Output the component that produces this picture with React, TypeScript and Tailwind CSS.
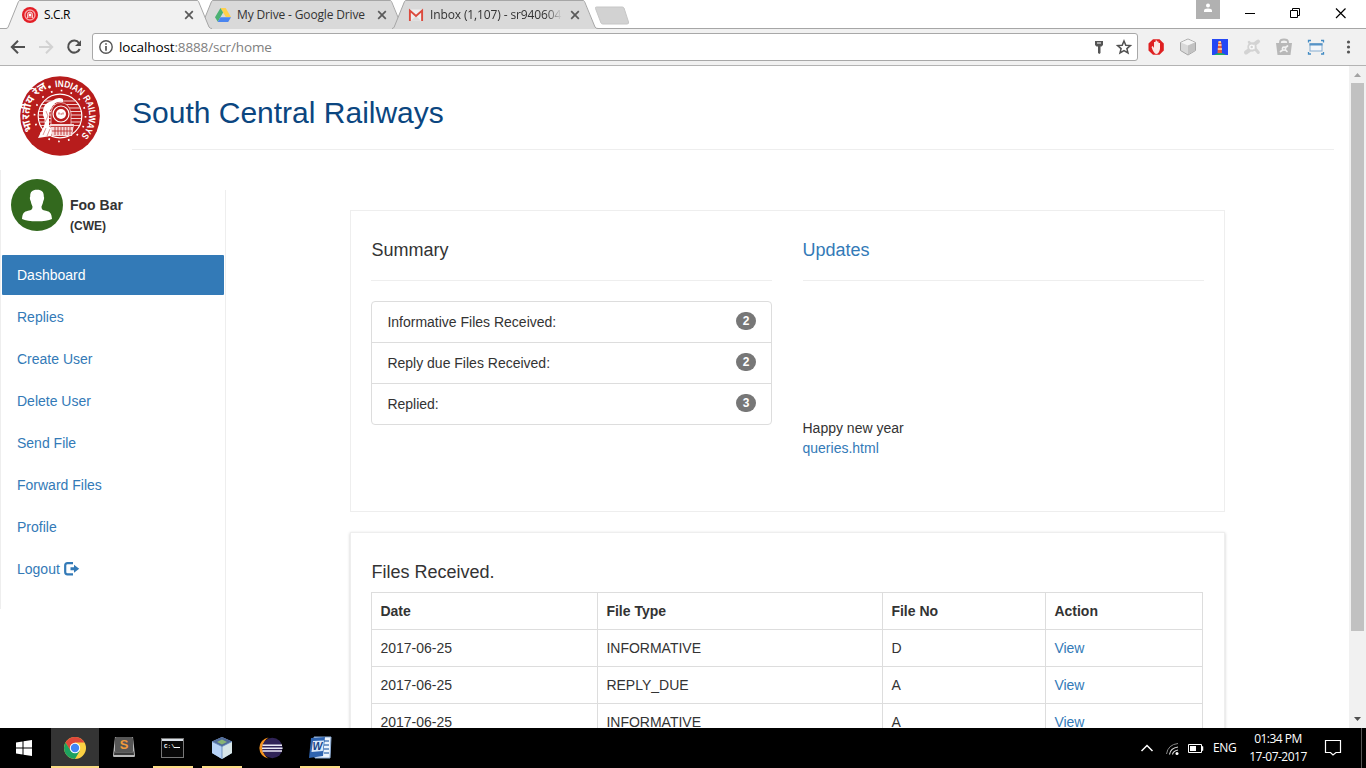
import React from "react";

const SANS = "font-['Liberation_Sans',sans-serif]";
const UI = "font-['Open_Sans','Noto_Sans',sans-serif]";

/* ---------- browser tabs ---------- */

function TabShape({ fill }: { fill: string }) {
  return (
    <svg className="absolute left-0 top-0" width="206" height="29" viewBox="0 0 206 29">
      <path d="M0 28.5 L2 28 L12.5 1.2 Q13 .5 14 .5 H190 Q191.5 .5 192 1.5 L203 27 Q204 28.5 206 28.5 V29 H0Z" fill={fill} />
      <path d="M0 28.5 Q1.5 28.5 2.2 27 L12.5 1.5 Q13 .5 14 .5 H191 Q192 .5 192.5 1.5 L203 27 Q204 28.5 206 28.5" fill="none" stroke="#a6a6a6" />
    </svg>
  );
}

function Tab({ icon, title, active = false, fade = false, textClass }: { icon: React.ReactNode; title: string; active?: boolean; fade?: boolean; textClass: string }) {
  return (
    <div className={active ? "relative z-10 ml-1.5 h-[29px] w-[205px]" : "relative -ml-3 h-[29px] w-[205px]"}>
      <TabShape fill={active ? "#f1f1f1" : "#d9d9d9"} />
      <div className="relative flex h-[29px] items-center pl-4">
        <span className="h-4 w-4 shrink-0">{icon}</span>
        <span className={`ml-1.5 w-[132px] overflow-hidden text-[12px] leading-4 whitespace-nowrap ${textClass} ${fade ? "[mask-image:linear-gradient(to_right,black_88%,transparent)] text-[#333]" : active ? "text-black" : "text-[#333]"}`}>{title}</span>
        <svg className="ml-[8px] shrink-0" width="10" height="10" viewBox="0 0 10 10">
          <path d="M1.2 1.2 L8.8 8.8 M8.8 1.2 L1.2 8.8" stroke="#5a5a5a" strokeWidth="1.7" />
        </svg>
      </div>
    </div>
  );
}

const RailFavicon = () => (
  <svg width="16" height="16" viewBox="0 0 16 16">
    <circle cx="8" cy="8" r="8" fill="#e31e26" />
    <circle cx="8" cy="8" r="5" fill="none" stroke="#f5a5a8" strokeWidth="1.4" />
    <path d="M5.5 11 V7.5 A2.5 2.5 0 0 1 10.5 7.5 V11" fill="#f07378" stroke="#fbd6d7" strokeWidth=".9" />
    <circle cx="8" cy="8" r="1.2" fill="#fff" />
  </svg>
);
const DriveIcon = () => (
  <svg width="16" height="16" viewBox="0 0 16 16">
    <path d="M5.5 1 H10.7 L16 10 H10.8Z" fill="#ffd04b" />
    <path d="M5.5 1 L8.1 5.6 L2.8 14.8 L0 10.2Z" fill="#4bb173" />
    <path d="M5.4 10.2 H16 L13.2 14.9 H2.7Z" fill="#4a85f0" />
  </svg>
);
const GmailIcon = () => (
  <svg width="16" height="16" viewBox="0 0 16 16">
    <path d="M1 2.5 H15 V14 H1Z" fill="#efefef" />
    <path d="M3 13.8 L8 9 L13 13.8Z" fill="#dcdcdc" />
    <path d="M1.9 13.9 V3.6 L8 9 L14.1 3.6 V13.9" fill="none" stroke="#dc4b3e" strokeWidth="1.9" />
  </svg>
);

function TabStrip() {
  return (
    <div className="relative flex h-[29px] bg-white">
      <div className="absolute bottom-0 left-0 h-px w-full bg-[#a6a6a6]" />
      <Tab active icon={<RailFavicon />} title="S.C.R" textClass="tracking-[-0.35px]" />
      <Tab icon={<DriveIcon />} title="My Drive - Google Drive" textClass="tracking-[-0.15px]" />
      <Tab fade icon={<GmailIcon />} title="Inbox (1,107) - sr940604" textClass="tracking-[-0.12px]" />
      <svg className="relative -ml-[3px] mt-1.5" width="36" height="19" viewBox="0 0 36 19">
        <path d="M2.5 1 H28 Q29.5 1 30 2 L34.5 16 Q35 18 33 18 H9 Q7.500 18 7 17 L1.500 2.500 Q1 1 2.500 1Z" fill="#d2d2d2" stroke="#c6c6c6" />
      </svg>
      <div className="ml-auto flex">
        <div className="flex h-[19px] w-6 justify-center bg-[#b1b1b1]">
          <svg width="24" height="19" viewBox="0 0 24 19">
            <circle cx="12" cy="5.500" r="2" fill="#fff" />
            <path d="M8 12 V10.500 Q8 8.500 12 8.500 Q16 8.500 16 10.500 V12Z" fill="#fff" />
          </svg>
        </div>
        <svg width="146" height="26" viewBox="0 0 146 26" fill="none" stroke="#000">
          <path d="M25 13.500 H35" />
          <path d="M70.500 10.500 H77.500 V17.500 H70.500Z M72.500 10.500 V8.500 H79.500 V15.500 H77.500" />
          <path d="M116 8.500 L125.500 18 M125.500 8.500 L116 18" strokeWidth="1.2" />
        </svg>
      </div>
    </div>
  );
}

/* ---------- toolbar ---------- */

function Toolbar() {
  return (
    <div className="flex h-[37px] items-center border-b border-[#b3b3b3] bg-[#f1f1f1]">
      <svg width="92" height="36" viewBox="0 0 92 36" fill="none">
        <path d="M25 18 H12 M18 11.700 L11.800 18 L18 24.300" stroke="#505050" strokeWidth="2" />
        <path d="M39 18 H52 M46 11.700 L52.200 18 L46 24.300" stroke="#d2d2d2" strokeWidth="2" />
        <path d="M79 14 A6 6 0 1 0 79.700 20" stroke="#505050" strokeWidth="2" />
        <path d="M81 11.300 V17 H75Z" fill="#505050" />
      </svg>
      <div className="flex h-7 w-[1046px] items-center rounded-[3px] border border-[#a8a8a8] bg-white pl-[6px]">
        <svg width="14" height="14" viewBox="0 0 14 14">
          <circle cx="7" cy="7" r="6.200" fill="none" stroke="#555" strokeWidth="1.400" />
          <path d="M7 3.200 V4.800 M7 6 V10.700" stroke="#555" strokeWidth="1.700" />
        </svg>
        <span className="ml-[6px] text-[13.500px] leading-5 tracking-[-0.130px] whitespace-nowrap text-[#808080]"><span className="text-black">localhost</span>:8888/scr/home</span>
        <svg className="ml-auto" width="47" height="26" viewBox="0 0 47 26">
          <path d="M5 7 H13 V11 L11.500 12.500 H10.500 V19 L9.300 20 L8 19 V12.500 H6.500 L5 11Z" fill="#555" />
          <path d="M7 9 H11" stroke="#fff" />
          <path d="M34 7 L35.800 11.200 L40.400 11.600 L36.900 14.600 L38 19 L34 16.700 L30 19 L31.100 14.600 L27.600 11.600 L32.200 11.200Z" fill="none" stroke="#505050" strokeWidth="1.500" />
        </svg>
      </div>
      <svg width="228" height="36" viewBox="1138 29 228 36">
        <path d="M1153 39.300 H1159.500 L1163.800 43.500 V50.500 L1159.500 54.800 H1153 L1148.500 50.500 V43.500Z" fill="#df2021" />
        <path d="M1151.500 47 L1152.700 46 L1154 48 V42 H1155.500 V46 V40.500 H1157 V46 V41.500 H1158.500 V47 V43 H1160 V49 Q1159 54 1156 54 Q1153.500 53 1151.500 47Z" fill="#f9e9e5" />
        <path d="M1188 39 L1195.500 42.500 V50.500 L1188 55 L1180.500 50.500 V42.500Z" fill="#d9d9d9" stroke="#a5a5a5" />
        <path d="M1181 42.500 L1188 45.500 L1195 42.500 L1188 39.500Z" fill="#f4f4f4" />
        <path d="M1188 45.500 L1195 42.500 V50.500 L1188 54.500Z" fill="#c2c2c2" />
        <rect x="1212" y="39" width="16" height="16" fill="#2548f5" />
        <path d="M1214 55 Q1220 51 1226 55Z" fill="#20b35c" />
        <path d="M1218.200 42 H1221.300 L1222 53 H1217.500Z" fill="#ed5935" />
        <path d="M1218 45 H1221.500 M1217.800 49 H1222" stroke="#ffe0b5" strokeWidth="1.500" />
        <rect x="1218.500" y="41" width="2.500" height="2" fill="#ffd18b" />
        <g stroke="#d3d3d3" strokeLinecap="round" fill="none">
          <path d="M1254 44.500 L1258 41.500" strokeWidth="4" />
          <path d="M1255 48.500 L1258.300 52.500" strokeWidth="3" />
          <path d="M1249.500 50 L1246 52.500" strokeWidth="4" />
          <path d="M1250 43.500 L1249 42" strokeWidth="2.500" />
        </g>
        <circle cx="1252" cy="47" r="4.700" fill="#d3d3d3" />
        <circle cx="1251.700" cy="47" r="1.900" fill="none" stroke="#fafafa" strokeWidth="1.300" />
        <path d="M1254 44.800 V49.300" stroke="#fafafa" strokeWidth="1.100" />
        <path d="M1276 43 H1292 L1290.500 55 H1277.500Z" fill="#b8b8b8" />
        <path d="M1280 44 V42 Q1280 39.500 1284 39.500 Q1288 39.500 1288 42 V44" fill="none" stroke="#b8b8b8" strokeWidth="1.800" />
        <circle cx="1284" cy="48.700" r="2.400" fill="#f1f1f1" />
        <path d="M1285.500 47.500 L1287.500 46 M1285.500 50 L1287 51.500 M1282.500 50.300 L1280.500 51.500" stroke="#f1f1f1" strokeWidth="1.700" strokeLinecap="round" />
        <circle cx="1284" cy="48.700" r=".8" fill="#b8b8b8" />
        <rect x="1310" y="43.500" width="12" height="7.500" fill="#f3f6fa" stroke="#86add0" />
        <path d="M1309.500 44.500 H1322.500" stroke="#5593c7" strokeWidth="2" />
        <path d="M1308.500 42.500 V40.500 H1311 M1321 40.500 H1323.500 V42.500 M1323.500 52 V54 H1321 M1311 54 H1308.500 V52" fill="none" stroke="#438cc4" strokeWidth="1.300" />
        <g fill="#555"><circle cx="1348.500" cy="42" r="1.600" /><circle cx="1348.500" cy="47" r="1.600" /><circle cx="1348.500" cy="52" r="1.600" /></g>
      </svg>
    </div>
  );
}

/* ---------- page ---------- */

function RailwayLogo() {
  return (
    <svg width="80" height="80" viewBox="0 0 80 80">
      <defs>
        <path id="english" d="M35.500 11.350 A29 29 0 0 1 62 59" />
        <path id="hindi" d="M13 54.500 A30.500 30.500 0 0 1 27 12.500" />
      </defs>
      <circle cx="40" cy="40" r="39.800" fill="#b71c1c" />
      <circle cx="40" cy="40" r="25.500" fill="none" stroke="#fff" strokeWidth="1.700" strokeDasharray="1.700 8.310" />
      <circle cx="40" cy="40" r="21.800" fill="#b71c1c" stroke="#fff" strokeWidth="1.200" />
      <path d="M25 25 H55 M22 28.500 H58 M20 32 H60 M19 35.500 H61 M19 39 H61 M19 42.500 H61 M20 46 H60 M21 49.500 H59" stroke="#f3cfcf" strokeWidth="1.100" />
      <path d="M23 39 Q22 27 32 25 Q38 20 43 23 L43 26 Q35 25 32 31 Q29 35 29 42 L29 50 L33 54 L31 60 L18 62 L22 54 Q27 47 23 39Z" fill="#fff" />
      <path d="M26 35 L28 40 L25 46 M26 52 L23 59 M30 53 L27 60" fill="none" stroke="#d98080" strokeWidth=".8" />
      <path d="M31 36 Q33 26.500 41 26.500 Q49 27 51 37 V50 H31Z" fill="#b71c1c" stroke="#f3cfcf" strokeWidth=".8" />
      <circle cx="41" cy="38" r="8" fill="#b71c1c" stroke="#fff" strokeWidth="1.200" />
      <circle cx="41" cy="38" r="5" fill="#fff" />
      <path d="M39 36.500 V38.500 M40.500 38 H42 M43 36.500 V38.500" stroke="#b71c1c" strokeWidth=".8" />
      <path d="M30 48 H54 L52 60 H32Z" fill="#f6dada" />
      <path d="M31 50.500 H53 M32 55 H52 M35 51 V59 M38 51 V59 M41 51 V59 M44 51 V59 M47 51 V59 M50 51 V59" stroke="#b71c1c" strokeWidth=".8" />
      <text className={SANS} fill="#fff" fontSize="9.500" fontWeight="700"><textPath href="#english" textLength="72" lengthAdjust="spacingAndGlyphs">INDIAN RAILWAYS</textPath></text>
      <text fill="#fff" fontFamily="Noto Sans Devanagari, Noto Sans, sans-serif" fontSize="11" fontWeight="700"><textPath href="#hindi">भारतीय रेल</textPath></text>
      <circle cx="29.500" cy="11" r="1.400" fill="#fff" />
    </svg>
  );
}

const Avatar = () => (
  <svg width="52" height="52" viewBox="0 0 52 52">
    <circle cx="26" cy="26" r="26" fill="#33691e" />
    <path d="M26 10.800 C31 10.800 32.800 13 32.800 17.500 C33.500 18.500 33 21 32.300 22 C31.800 25 30.800 26.500 30.500 27.500 C30.500 30.500 31.500 31 35 31.800 C39 32.800 40.500 34 41 40 Q36 42.300 26 42.300 Q16 42.300 11 40 C11.500 34 13 32.800 17 31.800 C20.500 31 21.500 30.500 21.500 27.500 C21.200 26.500 20.200 25 19.700 22 C19 21 18.500 18.500 19.200 17.500 C19.200 13 21 10.800 26 10.800Z" fill="#fff" />
  </svg>
);

const menu = ["Dashboard", "Replies", "Create User", "Delete User", "Send File", "Forward Files", "Profile"];
const summary: [string, number][] = [["Informative Files Received:", 2], ["Reply due Files Received:", 2], ["Replied:", 3]];
const files = [["2017-06-25", "INFORMATIVE", "D"], ["2017-06-25", "REPLY_DUE", "A"], ["2017-06-25", "INFORMATIVE", "A"]];

function Sidebar() {
  return (
    <aside className="flex w-[226px] shrink-0">
      <div className="h-[439px] w-px shrink-0 bg-[#eee]" />
      <div className="flex-1 pt-[9px]">
        <div className="flex pl-2.5">
          <Avatar />
          <div className="ml-[7px] pt-4 font-bold text-[#333]">
            <div className="text-[14px] leading-5">Foo Bar</div>
            <div className="pt-px text-[12px] leading-5">(CWE)</div>
          </div>
        </div>
        <nav className="mt-[19px] ml-px flex flex-col gap-0.5 pr-px text-[14px] leading-5 text-[#337ab7]">
          {menu.map((item, i) => (
            <a key={item} className={i === 0 ? "h-10 rounded-[1px] bg-[#337ab7] px-[15px] py-2.5 text-white" : "h-10 px-[15px] py-2.5"}>{item}</a>
          ))}
          <a className="flex h-10 items-center px-[15px]">
            Logout
            <svg className="ml-1" width="16" height="14" viewBox="0 0 16 14">
              <path d="M9 1.200 H3.500 Q1.200 1.200 1.200 3.500 V10 Q1.200 12.300 3.500 12.300 H9" fill="none" stroke="#337ab7" strokeWidth="2.200" />
              <path d="M6.500 5.300 H10 V2.800 L15.200 6.800 L10 10.800 V8.300 H6.500Z" fill="#337ab7" />
            </svg>
          </a>
        </nav>
      </div>
      <div className="mt-5 w-px bg-[#eee]" />
    </aside>
  );
}

function Page() {
  return (
    <div className={`flex h-[662px] overflow-hidden bg-white text-[14px] leading-5 text-[#333] ${SANS}`}>
      <div className="flex w-[1349px] shrink-0 flex-col">
        <header className="flex h-[104px] shrink-0 pl-5">
          <div className="pt-2.5"><RailwayLogo /></div>
          <div className="ml-8 h-[84px] w-[1202px] border-b border-[#eee] pt-[30px]">
            <h1 className="text-[30px] leading-[33px] text-[#0b4680]">South Central Railways</h1>
          </div>
        </header>
        <div className="flex flex-1">
          <Sidebar />
          <main className="ml-[124px] w-[875px] pt-10">
            <section className="flex h-[302px] gap-[30.5px] border border-[#eee] px-5 pt-[29px]">
              <div className="w-[401px]">
                <h2 className="border-b border-[#eee] pb-5 pl-[0.4px] text-[18px] leading-5">Summary</h2>
                <ul className="mt-5 rounded border border-[#ddd]">
                  {summary.map(([label, n], i) => (
                    <li key={label} className={i === 0 ? "flex h-10 justify-between pt-2.5 pr-[15px] pl-[15.4px]" : "flex h-[41px] justify-between border-t border-[#ddd] pt-2.5 pr-[15px] pl-[15.4px]"}>
                      {label}
                      <span className="h-[18px] w-5 rounded-[10px] bg-[#777] text-center text-[12px] leading-[18px] font-bold text-white">{n}</span>
                    </li>
                  ))}
                </ul>
              </div>
              <div className="w-[401.5px] text-[#337ab7]">
                <h2 className="border-b border-[#eee] pb-5 text-[18px] leading-5">Updates</h2>
                <p className="mt-[137px] text-[#333]">Happy new year</p>
                <a>queries.html</a>
              </div>
            </section>
            <section className="mt-5 h-[300px] border border-[#eee] px-5 pt-[29px] shadow-[0_1px_3px_rgba(0,0,0,0.2)]">
              <h2 className="pl-[0.4px] text-[18px] leading-5">Files Received.</h2>
              <table className="mt-2.5 w-[832px] table-fixed border-collapse">
                <colgroup><col className="w-[226px]" /><col className="w-[285px]" /><col className="w-[163px]" /><col className="w-[157px]" /></colgroup>
                <thead>
                  <tr>{["Date", "File Type", "File No", "Action"].map((h) => <th key={h} className="h-[37px] border border-[#ddd] px-[8.4px] py-0 text-left font-bold">{h}</th>)}</tr>
                </thead>
                <tbody>
                  {files.map((row, i) => (
                    <tr key={i}>
                      {row.map((c) => <td key={c} className="h-[37px] border border-[#ddd] px-[8.4px] py-0">{c}</td>)}
                      <td className="h-[37px] border border-[#ddd] px-[8.4px] py-0 text-[#337ab7]">View</td>
                    </tr>
                  ))}
                </tbody>
              </table>
            </section>
          </main>
        </div>
      </div>
      <div className="flex w-[17px] flex-col items-center bg-[#f1f1f1]">
        <svg width="17" height="17" viewBox="0 0 17 17"><path d="M5 11 L8.500 7 L12 11Z" fill="#a3a3a3" /></svg>
        <div className="h-[548px] w-[13px] bg-[#c1c1c1]" />
        <svg className="mt-auto" width="17" height="17" viewBox="0 0 17 17"><path d="M5 6 L8.500 10 L12 6Z" fill="#505050" /></svg>
      </div>
    </div>
  );
}

/* ---------- taskbar ---------- */

const WindowsIcon = () => (
  <svg width="16" height="16" viewBox="0 0 16 16" fill="#fff"><path d="M0 2.500 L6.500 1.500 V7.500 H0Z M7.500 1.300 L16 0 V7.500 H7.500Z M0 8.500 H6.500 V14.500 L0 13.500Z M7.500 8.500 H16 V16 L7.500 14.700Z" /></svg>
);
const ChromeIcon = () => (
  <svg width="22" height="22" viewBox="0 0 22 22">
    <circle cx="11" cy="11" r="11" fill="#fbd043" />
    <path d="M1.500 5.500 A11 11 0 0 1 20.500 5.500 H11 L6.200 13.800Z" fill="#df483b" />
    <path d="M1.500 5.500 L6.500 13.500 L15.800 13.800 L11 22 A11 11 0 0 1 1.500 5.500Z" fill="#1da15f" />
    <circle cx="11" cy="11" r="5.200" fill="#fff" />
    <circle cx="11" cy="11" r="4.200" fill="#4285f4" />
  </svg>
);
const SublimeIcon = () => (
  <svg className="-mt-0.5" width="24" height="22" viewBox="0 0 24 22">
    <path d="M3 1 H21 L23 19.500 Q23 21 22 21 H2 Q1 21 1 19.500Z" fill="#b9b9b9" />
    <rect x="3" y="1" width="18" height="15.500" rx="1.500" fill="#565656" />
    <path d="M2.500 15 L2 19 H22 L21.500 15 L20.500 16.500 H3.500Z" fill="#3a3a3a" />
    <text x="7.800" y="12.800" className={SANS} fontSize="13" fontWeight="700" fill="#f29a3a">S</text>
  </svg>
);
const ConsoleIcon = () => (
  <svg className="-mt-px -ml-[2px]" width="23" height="20" viewBox="0 0 23 20">
    <rect x=".5" y=".5" width="22" height="19" fill="#080808" stroke="#777" />
    <rect x="1" y="1" width="21" height="2" fill="#dbe1e8" />
    <text x="3" y="9.500" className="font-['Liberation_Mono',monospace]" fontSize="6" fontWeight="700" fill="#fff">C:\</text>
    <path d="M13 9.500 H19" stroke="#fff" />
  </svg>
);
const CubeIcon = () => (
  <svg width="22" height="24" viewBox="0 0 22 24">
    <path d="M11 1 L21 5.500 V17 L11 23 L1 17 V5.500Z" fill="#8eb4dc" />
    <path d="M11 1 L21 5.500 L11 10.500 L1 5.500Z" fill="#526b99" />
    <path d="M11 3.500 L16 6 L11 8.500 L6 6Z" fill="#89b474" />
    <path d="M1 5.500 L11 10.500 V23 L1 17Z" fill="#b7d3f6" />
    <path d="M11 10.500 L21 5.500 V17 L11 23Z" fill="#d8e6e8" />
    <path d="M1 5.500 L11 10.500 L21 5.500 M11 10.500 V23" fill="none" stroke="#5d80b4" strokeWidth=".8" />
  </svg>
);
const EclipseIcon = () => (
  <svg width="24" height="22" viewBox="0 0 24 22">
    <path d="M9.500 .5 A10.600 10.600 0 0 0 9.500 21.500 A12.500 12.500 0 0 1 9.500 .5Z" fill="#f5931f" />
    <circle cx="13.300" cy="11" r="10.200" fill="#302357" />
    <path d="M3.500 8.300 H23 M3 11.200 H23.500 M3.500 14 H23" stroke="#eae9f5" strokeWidth="1.400" />
  </svg>
);
const WordIcon = () => (
  <svg width="24" height="24" viewBox="0 0 24 24">
    <path d="M6 1 H23 L22 22 H7Z" fill="#edf4fd" stroke="#8babd4" />
    <path d="M16 5 H21 M16 9 H21 M16 13 H21 M16 17 H21" stroke="#5380ba" strokeWidth="1.500" />
    <path d="M3 2 L17 1 L15 20 L1 22Z" fill="#2f64b0" />
    <path d="M5 5 L16 4.500 L14.800 15 L3.500 16Z" fill="#dceafa" />
    <text x="4.500" y="13.500" className={SANS} fontSize="10.500" fontWeight="700" fontStyle="italic" fill="#174487">W</text>
  </svg>
);

function TaskButton({ children, open = false, active = false }: { children: React.ReactNode; open?: boolean; active?: boolean }) {
  return (
    <div className={active ? "flex h-10 w-12 flex-col bg-[#343434]" : "flex h-10 w-12 flex-col"}>
      <div className="flex h-[38px] items-center justify-center pt-0.5">{children}</div>
      <div className={active ? "h-0.5 w-12 bg-[#fbdc86]" : open ? "mx-auto h-0.5 w-10 bg-[#fbdc86]" : "h-0.5"} />
    </div>
  );
}

function Taskbar() {
  return (
    <div className="flex h-10 items-center bg-black text-white">
      <div className="flex w-[51px] items-center pl-4"><WindowsIcon /></div>
      <div className="flex gap-px">
        <TaskButton active><ChromeIcon /></TaskButton>
        <TaskButton><SublimeIcon /></TaskButton>
        <TaskButton open><ConsoleIcon /></TaskButton>
        <TaskButton open><CubeIcon /></TaskButton>
        <TaskButton><EclipseIcon /></TaskButton>
        <TaskButton open><WordIcon /></TaskButton>
      </div>
      <svg className="ml-auto" width="73" height="40" viewBox="1135 728 73 40" fill="none">
        <path d="M1141.500 751 L1147 745.500 L1152.500 751" stroke="#fff" strokeWidth="1.500" />
        <path d="M1166.500 754 Q1168 744.500 1178 743.500" stroke="#888" />
        <path d="M1169.500 754.500 Q1170.500 748 1178 747 M1172.500 754.500 Q1173 751 1178 750" stroke="#ddd" strokeWidth="1.200" />
        <circle cx="1177" cy="753.500" r="1.500" fill="#fff" />
        <path d="M1188.500 744.500 H1201.500 V752.500 H1188.500Z" stroke="#fff" />
        <path d="M1202 746.500 H1203 V750.500 H1202Z" fill="#fff" stroke="#fff" strokeWidth=".5" />
        <rect x="1190" y="746" width="6" height="5" fill="#fff" />
      </svg>
      <div className="ml-[5px] w-6 text-[12px] leading-4 tracking-[-0.400px]">ENG</div>
      <div className="ml-2 w-[66px] text-center text-[12px] leading-[18px] tracking-[-0.500px] whitespace-nowrap"><div>01:34 PM</div><div>17-07-2017</div></div>
      <svg className="ml-[5px]" width="50" height="40" viewBox="1316 728 50 40" fill="none">
        <path d="M1325.500 740.500 H1340.500 V752.500 H1336 L1333 755 L1330.500 752.500 H1325.500Z" stroke="#fff" strokeWidth="1.200" />
        <path d="M1361.500 728 V768" stroke="#555" />
      </svg>
    </div>
  );
}

export default function App() {
  return (
    <div className={`flex h-[768px] w-[1366px] flex-col overflow-hidden bg-white ${UI}`}>
      <TabStrip />
      <Toolbar />
      <Page />
      <Taskbar />
    </div>
  );
}
